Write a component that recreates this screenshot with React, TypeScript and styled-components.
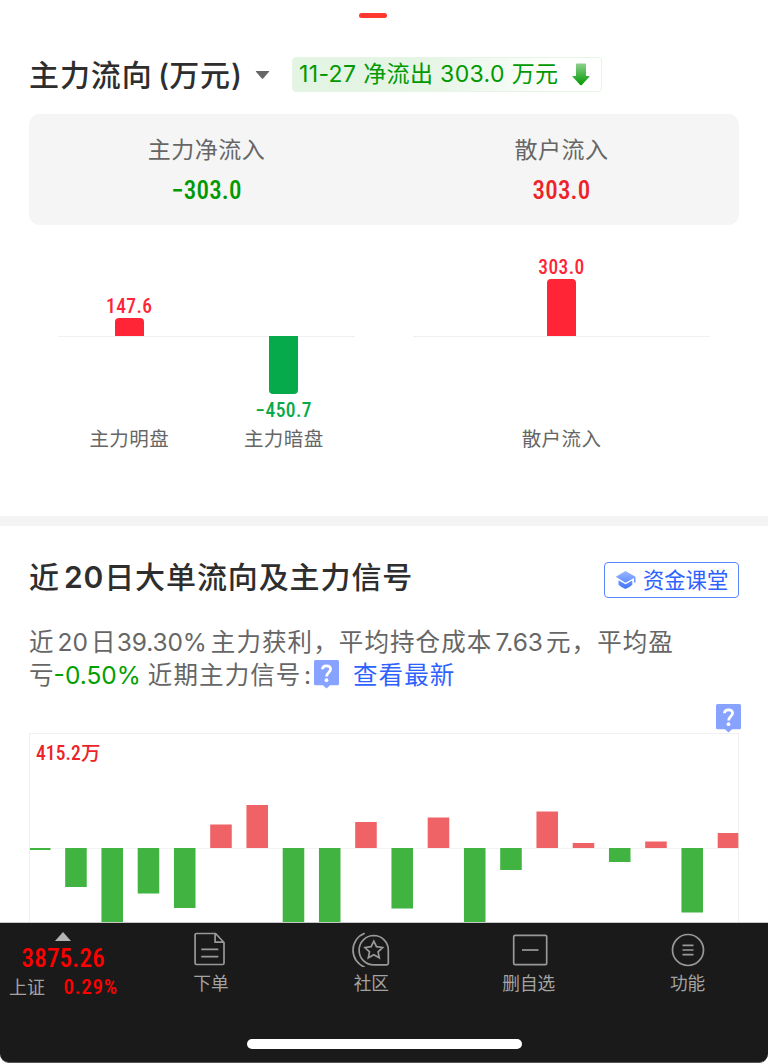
import React from 'react';
import styled, { createGlobalStyle } from 'styled-components';

const GlobalStyle = createGlobalStyle`
  * { box-sizing: border-box; }
  body {
    margin: 0;
    background: #fff;
    font-family: Inter, "Noto Sans CJK SC", sans-serif;
    font-weight: 400;
    color: #666;
  }
`;

const numberFont = 'Roboto, "Noto Sans CJK SC", sans-serif';

const Page = styled.div`
  width: 768px;
  height: 1063px;
  display: flex;
  flex-direction: column;
  overflow: hidden;
  background: #fff;
`;

const TabIndicator = styled.div`
  flex: none;
  width: 28px;
  height: 5px;
  margin: 13px 0 0 359px;
  border-radius: 3px;
  background: #fe3830;
`;

const FlowSection = styled.section`
  flex: none;
  height: 498px;
  padding: 39px 29px 0;
`;

const FlowHeader = styled.header`
  display: flex;
  align-items: center;
  height: 35px;
  white-space: nowrap;
`;

const Title = styled.h2`
  margin: 0;
  font-size: 30px;
  line-height: 36px;
  font-weight: 500;
  color: #2e2e2e;
  letter-spacing: 0.9px;
  white-space: nowrap;
`;

const Run = styled.span<{ $ml?: number; $ls?: number; $weight?: number }>`
  margin-left: ${(p) => p.$ml ?? 0}px;
  ${(p) => (p.$ls !== undefined ? `letter-spacing: ${p.$ls}px;` : '')}
  ${(p) => (p.$weight ? `font-weight: ${p.$weight};` : '')}
`;

const TitleWrap = styled.div`
  width: 226px;
`;

const Caret = styled.svg`
  display: block;
  margin-right: 22px;
`;

const Chip = styled.div`
  display: flex;
  align-items: center;
  width: 310px;
  height: 35px;
  padding-left: 6px;
  border: 1px solid #e6f5e6;
  border-radius: 4px;
  background: linear-gradient(90deg, #e3f4e3 0%, #e6f5e6 45%, #fff 88%);
  color: #009900;
  font-size: 23px;
  line-height: 33px;
`;

const ChipText = styled.span`
  width: 272px;
  letter-spacing: 0.36px;
`;

const Summary = styled.div`
  display: flex;
  height: 111px;
  margin-top: 22px;
  border-radius: 11px;
  background: #f5f5f5;
`;

const SummaryItem = styled.div`
  flex: 1;
  display: flex;
  flex-direction: column;
  align-items: center;
  padding-top: 20px;
`;

const SummaryLabel = styled.div`
  height: 32px;
  line-height: 32px;
  font-size: 23px;
  letter-spacing: 0.5px;
`;

const SummaryValue = styled.div<{ $color: string }>`
  margin-top: 9px;
  height: 32px;
  line-height: 32px;
  font-family: ${numberFont};
  font-size: 25px;
  font-weight: 500;
  font-stretch: 85%;
  letter-spacing: 0.2px;
  color: ${(p) => p.$color};
`;

const Columns = styled.div`
  display: flex;
  height: 240px;
`;

const ColumnGroup = styled.div`
  position: relative;
  flex: 1;
  display: flex;
  justify-content: center;
`;

const ZeroLine = styled.div`
  position: absolute;
  left: 29px;
  right: 29px;
  top: 111px;
  height: 1px;
  background: #f0f0f0;
`;

const Column = styled.div`
  position: relative;
  width: 154.5px;
  display: flex;
  flex-direction: column;
  align-items: center;
`;

const Half = styled.div<{ $up?: boolean }>`
  height: ${(p) => (p.$up ? 111 : 89)}px;
  display: flex;
  flex-direction: column;
  align-items: center;
  justify-content: ${(p) => (p.$up ? 'flex-end' : 'flex-start')};
`;

const ColumnBar = styled.div<{ $h: number; $up: boolean }>`
  width: 29px;
  height: ${(p) => p.$h}px;
  border-radius: ${(p) => (p.$up ? '4px 4px 0 0' : '0 0 4px 4px')};
  background: ${(p) => (p.$up ? '#ff2436' : '#07aa4b')};
`;

const ColumnValue = styled.div<{ $up: boolean }>`
  height: 24px;
  line-height: 26px;
  margin-top: ${(p) => (p.$up ? 0 : 4)}px;
  font-family: ${numberFont};
  font-size: 19.5px;
  font-weight: 500;
  font-stretch: 85%;
  letter-spacing: 0.4px;
  color: ${(p) => (p.$up ? '#ff2436' : '#07aa4b')};
`;

const ColumnLabel = styled.div`
  height: 28px;
  line-height: 28px;
  font-size: 19.5px;
  letter-spacing: 0.4px;
`;

const Divider = styled.div`
  flex: none;
  height: 10px;
  background: #f4f4f4;
`;

const SignalSection = styled.section`
  flex: 1;
  min-height: 0;
  overflow: hidden;
  padding: 36px 29px 0;
`;

const SignalHeader = styled.header`
  display: flex;
  justify-content: space-between;
  height: 36px;
`;

const SignalTitle = styled(Title)`
  line-height: 31px;
`;

const ClassButton = styled.button`
  display: flex;
  align-items: center;
  gap: 7px;
  width: 135px;
  height: 36px;
  padding: 0 0 0 10px;
  border: 1px solid #5c88ff;
  border-radius: 4px;
  background: #fff;
  color: #2e62ff;
  font: 400 21.3px/34px Inter, "Noto Sans CJK SC", sans-serif;
  white-space: nowrap;
`;

const Paragraph = styled.p`
  margin: 28px 0 0;
`;

const Line = styled.span`
  display: flex;
  align-items: center;
  height: 32.5px;
  line-height: 32px;
  font-size: 24.5px;
  letter-spacing: 1.1px;
  white-space: nowrap;
`;

const Loss = styled.span`
  color: #00a000;
  letter-spacing: 0;
  margin-left: -1px;
`;

const Link = styled.a`
  color: #2e62ff;
  margin-left: 14px;
`;

const HelpRow = styled.div`
  display: flex;
  justify-content: flex-end;
  height: 29px;
  margin: 13px -2px 0 0;
`;

const HelpSvg = styled.svg`
  display: block;
  flex: none;
`;

const Chart = styled.div`
  position: relative;
  width: 710px;
  height: 230px;
`;

const ChartSvg = styled.svg`
  display: block;
`;

const Peak = styled.div`
  position: absolute;
  left: 7px;
  top: 8px;
  line-height: 26px;
  font-family: ${numberFont};
  font-size: 19.5px;
  font-weight: 500;
  font-stretch: 85%;
  letter-spacing: 0.1px;
  color: #ee2229;
`;

const BottomArea = styled.footer`
  flex: none;
  height: 141px;
  border-top: 1px solid #c8c8c8;
  background: #fff;
`;

const BottomBar = styled.div`
  height: 140px;
  display: flex;
  flex-direction: column;
  border-radius: 0 0 9px 9px;
  border-bottom: 1px solid #555;
  background: #1a1a1a;
`;

const NavRow = styled.nav`
  display: flex;
  height: 116px;
  color: #a3a3a3;
`;

const IndexQuote = styled.div`
  width: 131.5px;
  display: flex;
  flex-direction: column;
  padding-top: 9px;
`;

const UpTriangle = styled.svg`
  display: block;
  margin-left: 55px;
`;

const IndexValue = styled.div`
  margin: 4px 0 0 21.5px;
  height: 28px;
  line-height: 28px;
  font-family: ${numberFont};
  font-size: 25px;
  font-weight: 500;
  font-stretch: 85%;
  letter-spacing: 0.2px;
  color: #ff0000;
`;

const IndexMeta = styled.div`
  display: flex;
  align-items: center;
  height: 29px;
  padding-left: 9px;
  font-size: 18px;
  line-height: 29px;
`;

const IndexChange = styled.span`
  margin-left: 18.5px;
  font-family: ${numberFont};
  font-size: 21px;
  line-height: 27px;
  margin-bottom: 1px;
  font-weight: 500;
  font-stretch: 85%;
  letter-spacing: 0.7px;
  color: #ff0000;
`;

const NavItem = styled.div<{ $shift?: number }>`
  width: 158.9px;
  display: flex;
  flex-direction: column;
  align-items: center;
  padding: 8px 0 0 ${(p) => p.$shift ?? 0}px;
  font-size: 17.7px;
`;

const NavLabel = styled.span`
  height: 28px;
  line-height: 28px;
  margin-top: 3px;
`;

const HomeIndicator = styled.div`
  width: 275px;
  height: 10px;
  margin-left: 247px;
  border-radius: 5px;
  background: #fff;
`;

const Help = () => (
  <HelpSvg width="25" height="29" viewBox="0 0 25 29">
    <path d="M1.5 0H23.5Q25 0 25 1.5V23.8Q25 25.3 23.5 25.3H16L12.5 28.6L9 25.3H1.5Q0 25.3 0 23.8V1.5Q0 0 1.5 0Z" fill="#88a2ff" />
    <path d="M8.4 9.2C8.5 6.7 10.2 5.8 12.5 5.8C14.9 5.8 16.6 7 16.6 9.2C16.6 12 12.6 12.5 12.6 16.4" fill="none" stroke="#fff" strokeWidth="2.7" />
    <circle cx="12.5" cy="20.2" r="1.9" fill="#fff" />
  </HelpSvg>
);

type ColumnData = { label: string; value: string; size: number; up: boolean };

const groups: ColumnData[][] = [
  [
    { label: '主力明盘', value: '147.6', size: 18.5, up: true },
    { label: '主力暗盘', value: '−450.7', size: 57, up: false },
  ],
  [{ label: '散户流入', value: '303.0', size: 57, up: true }],
];

/* Daily net flow, in chart units above (+) or below (-) the zero line. */
const flows = [-2, -39, -90, -45.5, -60, 23.5, 43, -90, -90, 26, -60.5, 30.5, -90, -22, 36.5, 5, -14, 6.5, -64.5, 15];

const FlowColumn = ({ label, value, size, up }: ColumnData) => (
  <Column>
    <Half $up>
      {up && <><ColumnValue $up>{value}</ColumnValue><ColumnBar $h={size} $up /></>}
    </Half>
    <Half>
      {!up && <><ColumnBar $h={size + 1} $up={false} /><ColumnValue $up={false}>{value}</ColumnValue></>}
    </Half>
    <ColumnLabel>{label}</ColumnLabel>
  </Column>
);

export default function App() {
  return (
    <Page>
      <GlobalStyle />
      <TabIndicator />
      <FlowSection>
        <FlowHeader>
          <TitleWrap>
            <Title>主力流向<Run $ml={5.5} $ls={0} $weight={550}>(</Run>万元<Run $weight={550}>)</Run></Title>
          </TitleWrap>
          <Caret width="15" height="10" viewBox="0 0 15 10">
            <path d="M1.2 1H13.8Q14.6 1 14 1.8L8.2 8.4Q7.5 9.1 6.8 8.4L1 1.8Q.4 1 1.2 1Z" fill="#666" />
          </Caret>
          <Chip>
            <ChipText>11-27 净流出 303.0 万元</ChipText>
            <svg width="20" height="23" viewBox="0 0 18 23">
              <defs>
                <linearGradient id="down" x1="0" y1="0" x2="0" y2="1">
                  <stop offset="0" stopColor="#8fd08f" />
                  <stop offset="1" stopColor="#009900" />
                </linearGradient>
              </defs>
              <path d="M5 .5H13Q14 .5 14 1.5V13H17.2Q18 13 17.4 13.8L9.8 22Q9 22.6 8.2 22L.6 13.8Q0 13 .8 13H4V1.5Q4 .5 5 .5Z" fill="url(#down)" />
            </svg>
          </Chip>
        </FlowHeader>
        <Summary>
          <SummaryItem>
            <SummaryLabel>主力净流入</SummaryLabel>
            <SummaryValue $color="#009900">−303.0</SummaryValue>
          </SummaryItem>
          <SummaryItem>
            <SummaryLabel>散户流入</SummaryLabel>
            <SummaryValue $color="#ee2229">303.0</SummaryValue>
          </SummaryItem>
        </Summary>
        <Columns>
          {groups.map((group, i) => (
            <ColumnGroup key={i}>
              <ZeroLine />
              {group.map((c) => <FlowColumn key={c.label} {...c} />)}
            </ColumnGroup>
          ))}
        </Columns>
      </FlowSection>
      <Divider />
      <SignalSection>
        <SignalHeader>
          <SignalTitle>近<Run $ml={4} $weight={600}>20</Run>日大单流向及主力信号</SignalTitle>
          <ClassButton>
            <svg width="21" height="20" viewBox="0 0 21 20">
              <defs>
                <linearGradient id="cap" x1="0" y1="0" x2="0" y2="1">
                  <stop offset="0" stopColor="#9bb8ff" />
                  <stop offset="1" stopColor="#3f74ff" />
                </linearGradient>
              </defs>
              <path d="M10.5 1L20.5 6.8V12.5H19V8L10.5 12.8L.8 6.8ZM3.5 10.2L10.5 14.3L17.3 10.4V14.7Q14 18 10.5 19Q7 18 3.5 14.7Z" fill="url(#cap)" />
            </svg>
            资金课堂
          </ClassButton>
        </SignalHeader>
        <Paragraph>
          <Line>
            近<Run $ml={3} $ls={0}>20</Run><Run $ml={3}>日</Run><Run $ls={-0.1}>39.30%</Run><Run $ml={4}>主力获利，平均持仓成本</Run><Run $ml={3} $ls={0}>7.63</Run><Run $ml={3}>元，平均盈</Run>
          </Line>
          <Line>
            亏<Loss>-0.50%</Loss><Run $ml={7}>近期主力信号</Run><Run $ml={2.5} $ls={3}>:</Run><Help /><Link>查看最新</Link>
          </Line>
        </Paragraph>
        <HelpRow><Help /></HelpRow>
        <Chart>
          <ChartSvg width="710" height="230" viewBox="29 733 710 230">
            <rect x="29.5" y="733.5" width="709" height="228" fill="none" stroke="#f0f0f0" />
            <path d="M30 848.5H738" stroke="#f3f3f3" />
            {flows.map((v, i) => {
              const x = Math.max(30, 28.95 + i * 36.25);
              const right = Math.min(738.3, 50.5 + i * 36.25);
              return (
                <rect
                  key={i}
                  x={x}
                  y={v > 0 ? 848 - v : 848}
                  width={right - x}
                  height={Math.abs(v)}
                  fill={v > 0 ? '#ef6265' : '#41b341'}
                />
              );
            })}
          </ChartSvg>
          <Peak>415.2万</Peak>
        </Chart>
      </SignalSection>
      <BottomArea>
        <BottomBar>
          <NavRow>
            <IndexQuote>
              <UpTriangle width="16" height="9" viewBox="0 0 16 9"><path d="M8 0L16 9H0Z" fill="#b3b3b3" /></UpTriangle>
              <IndexValue>3875.26</IndexValue>
              <IndexMeta>上证<IndexChange>0.29%</IndexChange></IndexMeta>
            </IndexQuote>
            <NavItem>
              <svg width="34" height="36" viewBox="1.7 0.3 34 36" fill="none" stroke="#999" strokeWidth="1.7">
                <path d="M23.3 2.8H4.2Q2.8 2.8 2.8 4.2V32.4Q2.8 33.8 4.2 33.8H30.3Q31.7 33.8 31.7 32.4V11.8ZM22.8 2.8V11.4H31.5M9 18.7H26M9 26H26" />
              </svg>
              <NavLabel>下单</NavLabel>
            </NavItem>
            <NavItem $shift={3}>
              <svg width="38" height="36" viewBox="0 0 38 36" fill="none" stroke="#999" strokeWidth="1.7">
                <path d="M21.8 4.5A14.7 14.7 0 1 0 21.8 33.9H34.7Q36.3 33.9 36.3 32.3V19.2A14.6 14.6 0 0 0 21.8 4.5Z" />
                <path d="M12.7 2.2A18.2 18.2 0 0 0 12.7 36.2" />
                <path d="M21.8 10.1L24.5 15.7L30.6 16.5L26.1 20.8L27.3 26.8L21.8 23.8L16.3 26.8L17.5 20.8L13 16.5L19.1 15.7Z" />
              </svg>
              <NavLabel>社区</NavLabel>
            </NavItem>
            <NavItem>
              <svg width="38" height="36" viewBox="0 0 38 36" fill="none" stroke="#999" strokeWidth="1.7">
                <rect x="3.7" y="4.3" width="33" height="29.3" rx="1.4" />
                <path d="M12 19H28.5" />
              </svg>
              <NavLabel>删自选</NavLabel>
            </NavItem>
            <NavItem>
              <svg width="34" height="36" viewBox="0 0 34 36" fill="none" stroke="#999" strokeWidth="1.7">
                <circle cx="17" cy="19" r="15.5" />
                <path d="M11.5 14.4H22.5M11.5 19H22.5M11.5 23.6H22.5" />
              </svg>
              <NavLabel>功能</NavLabel>
            </NavItem>
          </NavRow>
          <HomeIndicator />
        </BottomBar>
      </BottomArea>
    </Page>
  );
}
